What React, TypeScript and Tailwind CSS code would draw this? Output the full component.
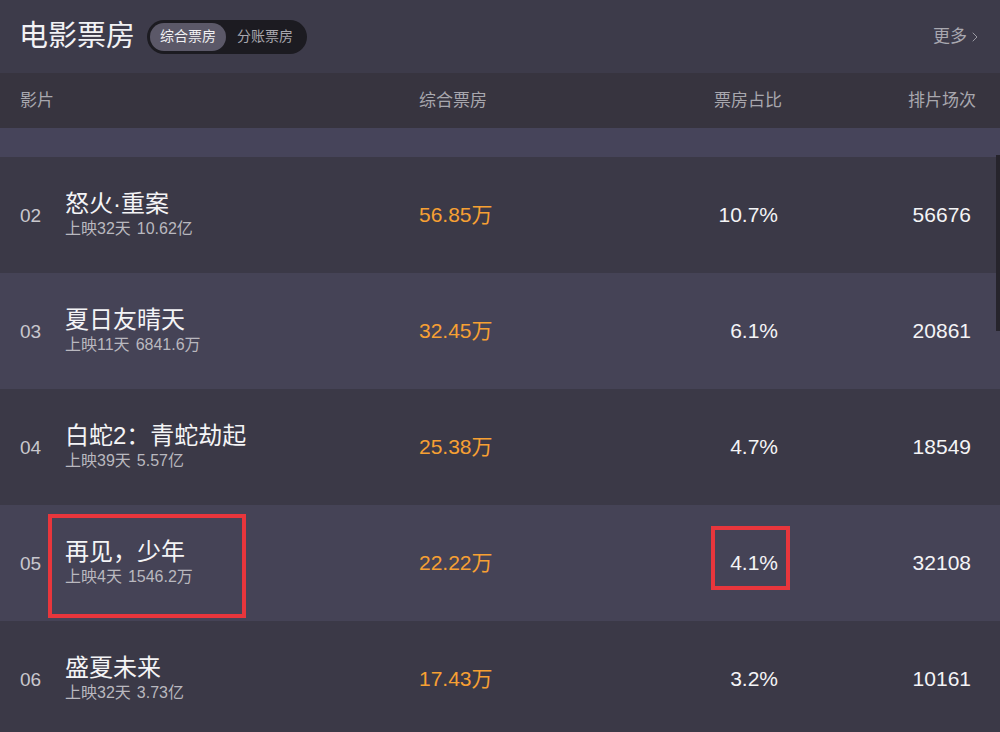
import { ChevronRight } from 'lucide-react';

const font = { fontFamily: '"Liberation Sans", "Noto Sans CJK SC", sans-serif' };

const movies = [
  { rank: '02', name: '怒火·重案', days: '上映32天', total: '10.62亿', box: '56.85万', rate: '10.7%', shows: '56676' },
  { rank: '03', name: '夏日友晴天', days: '上映11天', total: '6841.6万', box: '32.45万', rate: '6.1%', shows: '20861' },
  { rank: '04', name: '白蛇2：青蛇劫起', days: '上映39天', total: '5.57亿', box: '25.38万', rate: '4.7%', shows: '18549' },
  { rank: '05', name: '再见，少年', days: '上映4天', total: '1546.2万', box: '22.22万', rate: '4.1%', shows: '32108', marked: true },
  { rank: '06', name: '盛夏未来', days: '上映32天', total: '3.73亿', box: '17.43万', rate: '3.2%', shows: '10161' },
];

export default function App() {
  return (
    <div className="w-[1000px] h-[732px] overflow-hidden bg-[#3b3947] relative" style={font}>
      {/* top bar */}
      <div className="h-[73px] bg-[#3d3b4a] flex items-center pl-[19px] pr-[17px]">
        <h1 className="text-[29px] text-[#f2f2f5] leading-none">电影票房</h1>
        <div className="ml-[12px] h-[34px] w-[160px] rounded-full bg-[#1c1b21] flex items-center p-[3px]">
          <span className="h-[28px] w-[76px] rounded-full bg-[#5b5868] text-[#f0f0f2] text-[14px] flex items-center justify-center">
            综合票房
          </span>
          <span className="flex-1 text-center text-[14px] text-[#a8a7ae]">分账票房</span>
        </div>
        <div className="ml-auto flex items-center text-[17px] text-[#a9a8b0]">
          更多
          <ChevronRight size={16} strokeWidth={1.3} />
        </div>
      </div>

      {/* column header */}
      <div className="h-[55px] bg-[#37343f] flex items-center pl-[20px] pr-[24px] text-[17px] text-[#a8a7ae]">
        <div className="w-[399px]">影片</div>
        <div className="w-[250px]">综合票房</div>
        <div className="w-[113px] text-right">票房占比</div>
        <div className="flex-1 text-right">排片场次</div>
      </div>

      <div className="h-[29px] bg-[#46445a]" />

      {movies.map((m, i) => (
        <div
          key={m.rank}
          className={`relative h-[116px] flex items-center pl-[20px] pr-[29px] ${i % 2 === 0 ? 'bg-[#3b3947]' : 'bg-[#454356]'}`}
        >
          <div className="w-[399px] flex items-center">
            <span className="w-[45px] text-[19px] text-[#c9c8ce] pt-[2px]">{m.rank}</span>
            <div className="flex flex-col -mt-[3px]">
              <span className="text-[24px] leading-[30px] text-[#f4f4f6]">{m.name}</span>
              <span className="text-[16px] leading-[20px] text-[#b9b8bf]">
                {m.days}
                <span className="ml-[6px]">{m.total}</span>
              </span>
            </div>
          </div>
          <div className="w-[250px] text-[21px] text-[#f7a033]">{m.box}</div>
          <div className="w-[109px] text-right text-[21px] text-[#f4f4f6]">{m.rate}</div>
          <div className="flex-1 text-right text-[21px] text-[#f4f4f6]">{m.shows}</div>

          {m.marked && (
            <>
              <div className="absolute left-[48px] top-[9px] w-[198px] h-[104px] border-[4px] border-[#e8363c]" />
              <div className="absolute left-[711px] top-[21px] w-[79px] h-[64px] border-[4px] border-[#e8363c]" />
            </>
          )}
        </div>
      ))}

      {/* scrollbar */}
      <div className="absolute right-0 top-[155px] w-[4px] h-[176px] bg-[#26242c]" />
    </div>
  );
}
